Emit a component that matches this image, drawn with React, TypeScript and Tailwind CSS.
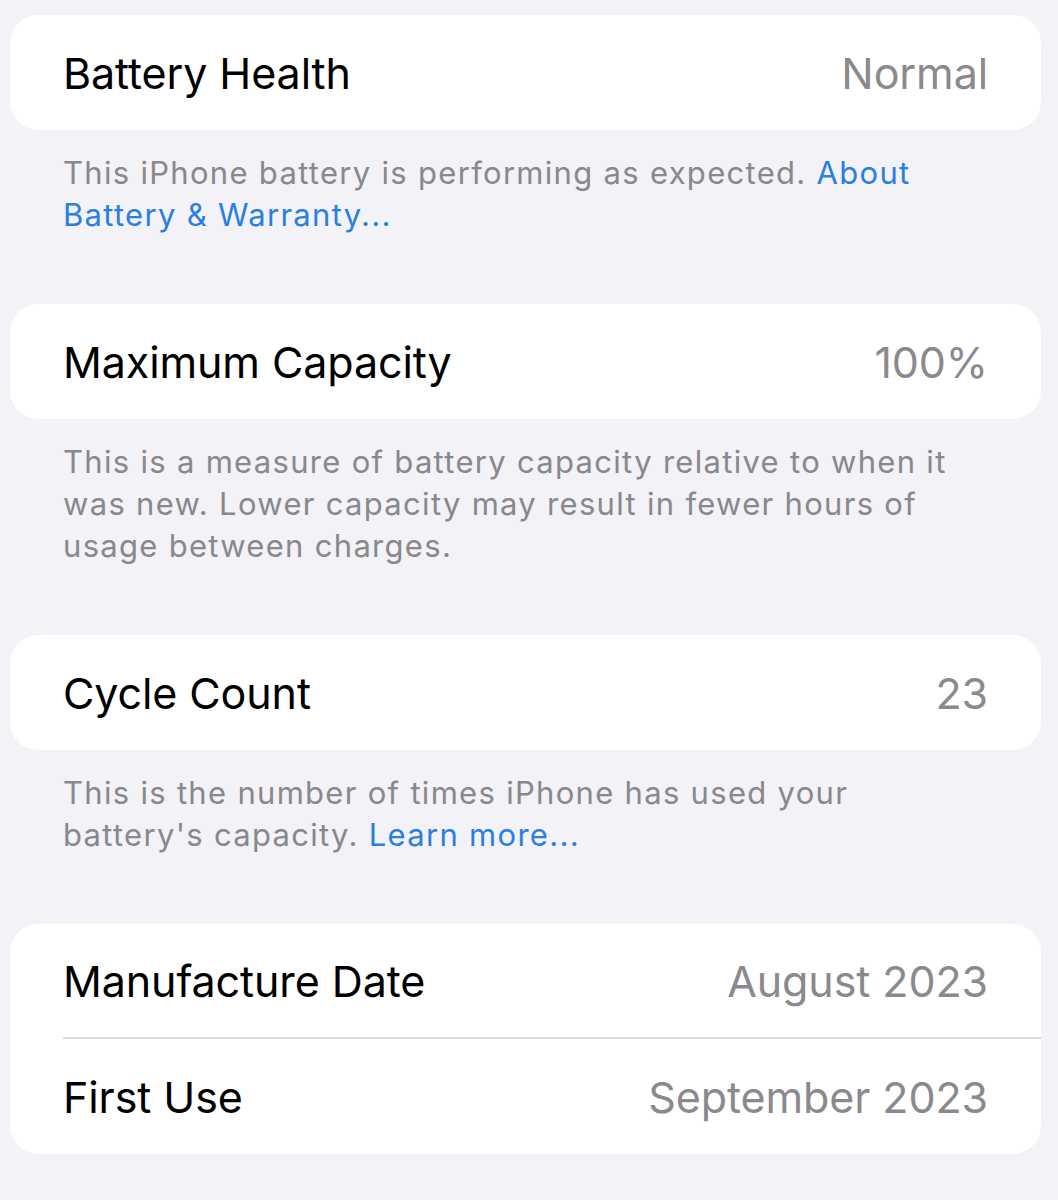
import React from 'react';

interface Row {
  label: string;
  value: string;
}

interface Section {
  rows: Row[];
  footer?: React.ReactNode;
}

const Link = ({ children }: { children: React.ReactNode }) => (
  <span className="text-[#2a7fe0]">{children}</span>
);

const sections: Section[] = [
  {
    rows: [{ label: 'Battery Health', value: 'Normal' }],
    footer: (
      <>
        This iPhone battery is performing as expected. <Link>About</Link>
        <br />
        <Link>Battery &amp; Warranty...</Link>
      </>
    ),
  },
  {
    rows: [{ label: 'Maximum Capacity', value: '100%' }],
    footer: (
      <>
        This is a measure of battery capacity relative to when it
        <br />
        was new. Lower capacity may result in fewer hours of
        <br />
        usage between charges.
      </>
    ),
  },
  {
    rows: [{ label: 'Cycle Count', value: '23' }],
    footer: (
      <>
        This is the number of times iPhone has used your
        <br />
        battery's capacity. <Link>Learn more...</Link>
      </>
    ),
  },
  {
    rows: [
      { label: 'Manufacture Date', value: 'August 2023' },
      { label: 'First Use', value: 'September 2023' },
    ],
  },
];

const SettingsRow = ({ row, last }: { row: Row; last: boolean }) => (
  <div className="pl-[53px]">
    <div
      className={`flex h-[115px] items-center justify-between pr-[53px] pt-[2px] ${
        last ? '' : 'border-b-2 border-[#dcdce0]'
      }`}
    >
      <span className="text-[43px] text-black tracking-[-0.1px]">{row.label}</span>
      <span className="text-[43px] text-[#8a8a8e] tracking-[-0.1px]">{row.value}</span>
    </div>
  </div>
);

export default function App() {
  return (
    <div
      className="min-h-[1200px] w-[1058px] bg-[#f2f2f7] pl-[10px] pr-[17px] pt-[15px]"
      style={{ fontFamily: 'Inter, "Noto Sans", sans-serif' }}
    >
      {sections.map((section, i) => (
        <div key={i}>
          <div className="overflow-hidden rounded-[28px] bg-white">
            {section.rows.map((row, j) => (
              <SettingsRow key={row.label} row={row} last={j === section.rows.length - 1} />
            ))}
          </div>
          {section.footer && (
            <p className="px-[53px] pb-[68px] pt-[22px] text-[31px] leading-[42px] text-[#88888d] tracking-[1.3px]">
              {section.footer}
            </p>
          )}
        </div>
      ))}
    </div>
  );
}
